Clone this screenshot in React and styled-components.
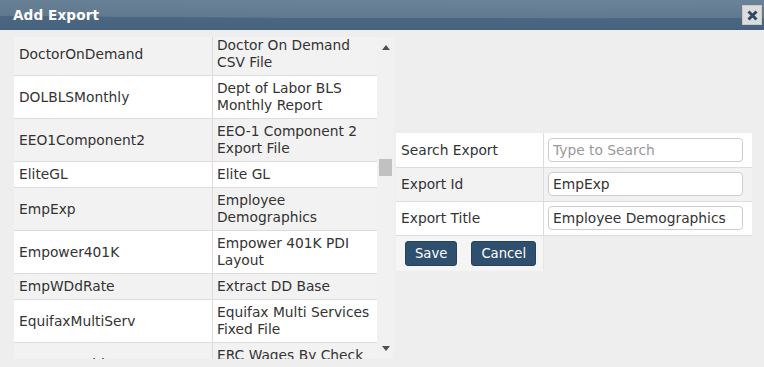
import styled, { createGlobalStyle } from 'styled-components';

const GlobalStyle = createGlobalStyle`
  html, body {
    margin : 0;
    padding : 0;
    background : #eeeeee;
  }
  body {
    font-family : "DejaVu Sans", Verdana, sans-serif;
    font-size : 13.8px;
    color : #333;
  }
`

const Dialog = styled.div`
  width : 764px;
  height : 367px;
  overflow : hidden;
  background : #eeeeee;
  display : flex;
  flex-direction : column;
`

const TitleBar = styled.div`
  height : 30px;
  flex : none;
  display : flex;
  align-items : center;
  justify-content : space-between;
  padding : 0 2px 0 13px;
  background :
    radial-gradient(ellipse 150% 62% at 75% 0%, #6c849a 0%, #61798f 97%, rgba(0,0,0,0) 100%),
    linear-gradient(#506c86, #46627c);
`

const Title = styled.span`
  color : #fff;
  font-weight : bold;
  font-size : 13.6px;
  letter-spacing : 0.1px;
`

const CloseButton = styled.button`
  width : 20px;
  height : 20px;
  padding : 0;
  border : 1px solid #c9c9c9;
  background : #dcdcdc;
  display : flex;
  align-items : center;
  justify-content : center;
  cursor : pointer;
`

const Body = styled.div`
  flex : 1;
  display : flex;
  gap : 2px;
  padding : 7px 12px 0 14px;
`

const ListWrap = styled.div`
  display : flex;
  height : 322px;
  flex : none;
`

const ListScroll = styled.div`
  width : 363px;
  height : 100%;
  overflow : hidden;
`

const ListTable = styled.table`
  width : 363px;
  table-layout : fixed;
  border-collapse : collapse;
  margin-top : -4px;
  line-height : 17px;
`

const Row = styled.tr`
  background : ${p => p.$odd ? '#fff' : '#f2f2f2'};
  border-bottom : 1px solid #dcdcdc;
`

const NameCell = styled.td`
  width : 188px;
  padding : 4px 5px;
  border-right : 1px solid #dcdcdc;
  vertical-align : middle;
  white-space : nowrap;
  overflow : hidden;
`

const DescCell = styled.td`
  padding : 4px 4px;
  white-space : pre;
  overflow : hidden;
  vertical-align : middle;
`

const ScrollBar = styled.div`
  width : 17px;
  background : #f1f1f1;
  display : flex;
  flex-direction : column;
`

const ArrowButton = styled.div`
  height : 21px;
  display : flex;
  align-items : center;
  justify-content : center;
`

const Track = styled.div`
  flex : 1;
  padding : 0 2px;
`

const Thumb = styled.div`
  height : 17px;
  background : #c1c1c1;
`

const FormPanel = styled.div`
  width : 356px;
  flex : none;
  padding-top : 96px;
`

const FormTable = styled.table`
  width : 356px;
  table-layout : fixed;
  border-collapse : collapse;
`

const FormRow = styled.tr`
  background : ${p => p.$shade ? '#f2f2f2' : '#fff'};
  border-bottom : 1px solid #dcdcdc;
  height : 34px;
`

const LabelCell = styled.td`
  width : 137px;
  padding : 0 5px;
  border-right : 1px solid #dcdcdc;
  white-space : nowrap;
`

const InputCell = styled.td`
  padding : 0 0 0 4px;
`

const TextInput = styled.input`
  box-sizing : border-box;
  width : 195px;
  height : 24px;
  padding : 0 4px;
  border : 1px solid #cccccc;
  border-radius : 4px;
  background : #fff;
  font-family : "DejaVu Sans", Verdana, sans-serif;
  font-size : 13.8px;
  color : #333;
  outline : none;
  &::placeholder {
    color : #999;
  }
`

const ButtonCell = styled.td`
  background : #f5f5f5;
  padding : 5px 9px 5px;
  border-right : 1px solid #e6e6e6;
`

const ButtonGroup = styled.div`
  display : flex;
  gap : 14px;
`

const ActionButton = styled.button`
  height : 25px;
  padding : 0 9px;
  border : 1px solid #26425d;
  border-radius : 3px;
  background : #2f4f6e;
  color : #fff;
  font-family : "DejaVu Sans", Verdana, sans-serif;
  font-size : 13.2px;
  cursor : pointer;
`

const exports = [
  ['DoctorOnDemand', 'Doctor On Demand\nCSV File'],
  ['DOLBLSMonthly', 'Dept of Labor BLS\nMonthly Report'],
  ['EEO1Component2', 'EEO-1 Component 2\nExport File'],
  ['EliteGL', 'Elite GL'],
  ['EmpExp', 'Employee\nDemographics'],
  ['Empower401K', 'Empower 401K PDI\nLayout'],
  ['EmpWDdRate', 'Extract DD Base'],
  ['EquifaxMultiServ', 'Equifax Multi Services\nFixed File'],
  ['ercwageschk', 'ERC Wages By Check\nExport'],
];

function Triangle({ down }) {
  return (
    <svg width="8" height="5" viewBox="0 0 8 5">
      <path d={down ? 'M0 0 L8 0 L4 5 Z' : 'M0 5 L8 5 L4 0 Z'} fill="#505050" />
    </svg>
  );
}

const App = () => {
  return (
    <Dialog>
      <GlobalStyle />
      <TitleBar>
        <Title>Add Export</Title>
        <CloseButton aria-label="close">
          <svg width="11" height="11" viewBox="0 0 11 11">
            <path d="M1.5 1.5 L9.5 9.5 M9.5 1.5 L1.5 9.5" stroke="#2b4a68" strokeWidth="3" />
          </svg>
        </CloseButton>
      </TitleBar>
      <Body>
        <ListWrap>
          <ListScroll>
            <ListTable>
              <tbody>
                {exports.map(([id, title], i) => (
                  <Row key={id} $odd={i % 2 === 1}>
                    <NameCell>{id}</NameCell>
                    <DescCell>{title}</DescCell>
                  </Row>
                ))}
              </tbody>
            </ListTable>
          </ListScroll>
          <ScrollBar>
            <ArrowButton><Triangle /></ArrowButton>
            <Track>
              <Thumb style={{ marginTop: 101 }} />
            </Track>
            <ArrowButton><Triangle down /></ArrowButton>
          </ScrollBar>
        </ListWrap>
        <FormPanel>
          <FormTable>
            <tbody>
              <FormRow>
                <LabelCell>Search Export</LabelCell>
                <InputCell><TextInput placeholder="Type to Search" /></InputCell>
              </FormRow>
              <FormRow $shade>
                <LabelCell>Export Id</LabelCell>
                <InputCell><TextInput defaultValue="EmpExp" /></InputCell>
              </FormRow>
              <FormRow>
                <LabelCell>Export Title</LabelCell>
                <InputCell><TextInput defaultValue="Employee Demographics" /></InputCell>
              </FormRow>
              <tr>
                <ButtonCell>
                  <ButtonGroup>
                    <ActionButton>Save</ActionButton>
                    <ActionButton>Cancel</ActionButton>
                  </ButtonGroup>
                </ButtonCell>
                <td />
              </tr>
            </tbody>
          </FormTable>
        </FormPanel>
      </Body>
    </Dialog>
  );
};

export default App;
